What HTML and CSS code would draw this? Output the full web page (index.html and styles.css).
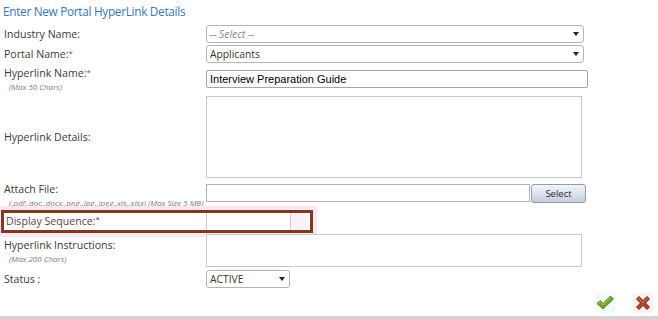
FILE: index.html
```html
<!DOCTYPE html>
<html lang="en">
<head>
    <meta charset="UTF-8">
    <meta name="viewport" content="width=device-width, initial-scale=1.0">
    <title>Enter New Portal HyperLink Details</title>
    <link rel="stylesheet" href="styles.css">
</head>
<body>

<div class="panel">
    <h1 class="panel-title">Enter New Portal HyperLink Details</h1>

    <div class="form-row row-industry">
        <div class="field-label">Industry Name:</div>
        <div class="select-box select-wide placeholder">
            <span>-- Select --</span>
            <span class="caret"></span>
        </div>
    </div>

    <div class="form-row row-portal">
        <div class="field-label">Portal Name:<span class="req">*</span></div>
        <div class="select-box select-wide">
            <span>Applicants</span>
            <span class="caret"></span>
        </div>
    </div>

    <div class="form-row row-name">
        <div class="field-label">
            Hyperlink Name:<span class="req">*</span>
            <div class="field-note">(Max 50 Chars)</div>
        </div>
        <input type="text" class="text-input name-input" value="Interview Preparation Guide">
    </div>

    <div class="form-row row-details">
        <div class="field-label">Hyperlink Details:</div>
        <textarea class="text-area details-area"></textarea>
    </div>

    <div class="form-row row-attach">
        <div class="field-label label-attach">
            Attach File:
            <div class="field-note">(.pdf,.doc,.docx,.png,.jpg,.jpeg,.xls,.xlsx) (Max Size 5 MB)</div>
        </div>
        <input type="text" class="text-input file-input">
        <button class="select-btn">Select</button>
    </div>

    <div class="form-row row-sequence">
        <div class="highlight-box">
            <div class="field-label">Display Sequence:<span class="req">*</span></div>
            <div class="seq-input"></div>
            <div class="seq-spin"></div>
        </div>
    </div>

    <div class="form-row row-instructions">
        <div class="field-label">
            Hyperlink Instructions:
            <div class="field-note">(Max 200 Chars)</div>
        </div>
        <textarea class="text-area instructions-area"></textarea>
    </div>

    <div class="form-row row-status">
        <div class="field-label">Status :</div>
        <div class="select-box select-status">
            <span>ACTIVE</span>
            <span class="caret"></span>
        </div>
    </div>

    <div class="form-actions">
        <span class="action-icon icon-save">
            <svg width="18" height="16" viewBox="0 0 18 16">
                <path d="M1 8.5 L4.5 5.5 L7 8.5 L14.5 1 L17.5 4 L7 14 Z" fill="#739f2d" stroke="#5a8320" stroke-width="1" stroke-linejoin="round"/>
                <path d="M2.5 8.5 L4.5 6.8 L7 9.8 L14.5 2.4" fill="none" stroke="#a9d05e" stroke-width="1"/>
            </svg>
        </span>
        <span class="action-icon icon-cancel">
            <svg width="16" height="16" viewBox="0 0 16 16">
                <path d="M1.5 4 L4 1.5 L8 5.5 L12 1.5 L14.5 4 L10.5 8 L14.5 12 L12 14.5 L8 10.5 L4 14.5 L1.5 12 L5.5 8 Z" fill="#a8492b" stroke="#7a2f17" stroke-width="1" stroke-linejoin="round"/>
                <path d="M3.5 3.5 L8 7.5 L12 3.5" fill="none" stroke="#d47f58" stroke-width="1"/>
            </svg>
        </span>
    </div>

    <div class="panel-footer"></div>
</div>

</body>
</html>
```

FILE: styles.css
```css
body {
    margin: 0;
    font-family: "Open Sans", Arial, sans-serif;
    color: #333;
    background-color: #fff;
}
.panel {
    width: 658px;
}
.panel-title {
    margin: 0;
    height: 23px;
    line-height: 22px;
    padding-left: 3px;
    font-size: 11.8px;
    font-weight: normal;
    letter-spacing: -0.3px;
    color: #3579b8;
}
.form-row {
    display: flex;
    align-items: center;
}
.field-label {
    width: 206px;
    box-sizing: border-box;
    padding-left: 4px;
    font-size: 10.6px;
    line-height: 14px;
    color: #3a3a3a;
    flex-shrink: 0;
}
.req {
    font-size: 8px;
    vertical-align: top;
    line-height: 11px;
    color: #d9362f;
}
.field-note {
    padding-left: 5px;
    font-size: 8px;
    line-height: 13px;
    font-style: italic;
    color: #7a7a7a;
}

/* row heights */
.row-industry { height: 21px; }
.row-portal { height: 20px; }
.row-name { height: 30px; }
.row-details { height: 86px; }
.row-attach { height: 26px; }
.row-sequence { height: 28px; align-items: flex-start; }
.row-instructions { height: 34px; }
.row-status { height: 22px; }

.label-attach {
    padding-top: 4px;
}

/* dropdowns */
.select-box {
    display: flex;
    align-items: center;
    justify-content: space-between;
    box-sizing: border-box;
    height: 18px;
    padding: 0 4px 0 3px;
    border: 1px solid #b4b4b4;
    border-radius: 3px;
    background-color: #fff;
    font-size: 10.3px;
    color: #333;
}
.select-wide {
    width: 378px;
}
.select-status {
    width: 84px;
}
.placeholder {
    font-style: italic;
    color: #8a8a8a;
}
.caret {
    width: 0;
    height: 0;
    border-left: 3.5px solid transparent;
    border-right: 3.5px solid transparent;
    border-top: 4px solid #222;
}

/* text inputs */
.text-input {
    box-sizing: border-box;
    height: 18px;
    margin: 0;
    padding: 0 3px;
    border: 1px solid #a6a6a6;
    border-radius: 2px;
    font-family: "Liberation Sans", Arial, sans-serif;
    font-size: 11px;
    color: #000;
    outline: none;
}
.name-input {
    width: 382px;
}
.file-input {
    width: 324px;
    height: 18px;
    border-color: #b0b0b0;
    border-radius: 0;
}
.text-area {
    box-sizing: border-box;
    margin: 0;
    padding: 2px;
    border: 1px solid #c8c8c8;
    resize: none;
    outline: none;
}
.details-area {
    width: 376px;
    height: 82px;
}
.instructions-area {
    width: 376px;
    height: 33px;
    align-self: flex-start;
}

.select-btn {
    width: 55px;
    height: 19px;
    margin-left: 1px;
    padding: 0;
    border: 1px solid #8f9cae;
    border-radius: 3px;
    background: linear-gradient(#f2f5f9, #dbe1ea 55%, #c4ccd8);
    font-family: "Open Sans", Arial, sans-serif;
    font-size: 9.5px;
    color: #2a2a2a;
}

/* highlighted sequence row */
.highlight-box {
    display: flex;
    align-items: stretch;
    box-sizing: border-box;
    width: 312px;
    height: 23px;
    margin: 4px 0 0 1px;
    border: 3px solid #7d3b1d;
    box-shadow: 0 0 0 4px #fce6f5;
    background-color: #fff;
}
.highlight-box .field-label {
    width: 202px;
    padding-left: 2px;
    line-height: 17px;
    color: #6b3a44;
}
.highlight-box .req {
    color: #6b3a44;
}
.seq-input {
    width: 83px;
    border-left: 1px solid #e2bfd2;
    border-right: 1px solid #e2bfd2;
}
.seq-spin {
    width: 17px;
    background-color: #fdf0f8;
}

/* bottom actions */
.form-actions {
    display: flex;
    justify-content: flex-end;
    align-items: center;
    gap: 18px;
    height: 26px;
    padding-right: 5px;
}
.action-icon {
    display: flex;
    align-items: center;
    justify-content: center;
    width: 20px;
    height: 20px;
}
.icon-save {
    background-color: #f2fbfb;
}
.icon-cancel {
    background-color: #fdf0f6;
}
.panel-footer {
    height: 3px;
    background-color: #d2d2d2;
}
```
